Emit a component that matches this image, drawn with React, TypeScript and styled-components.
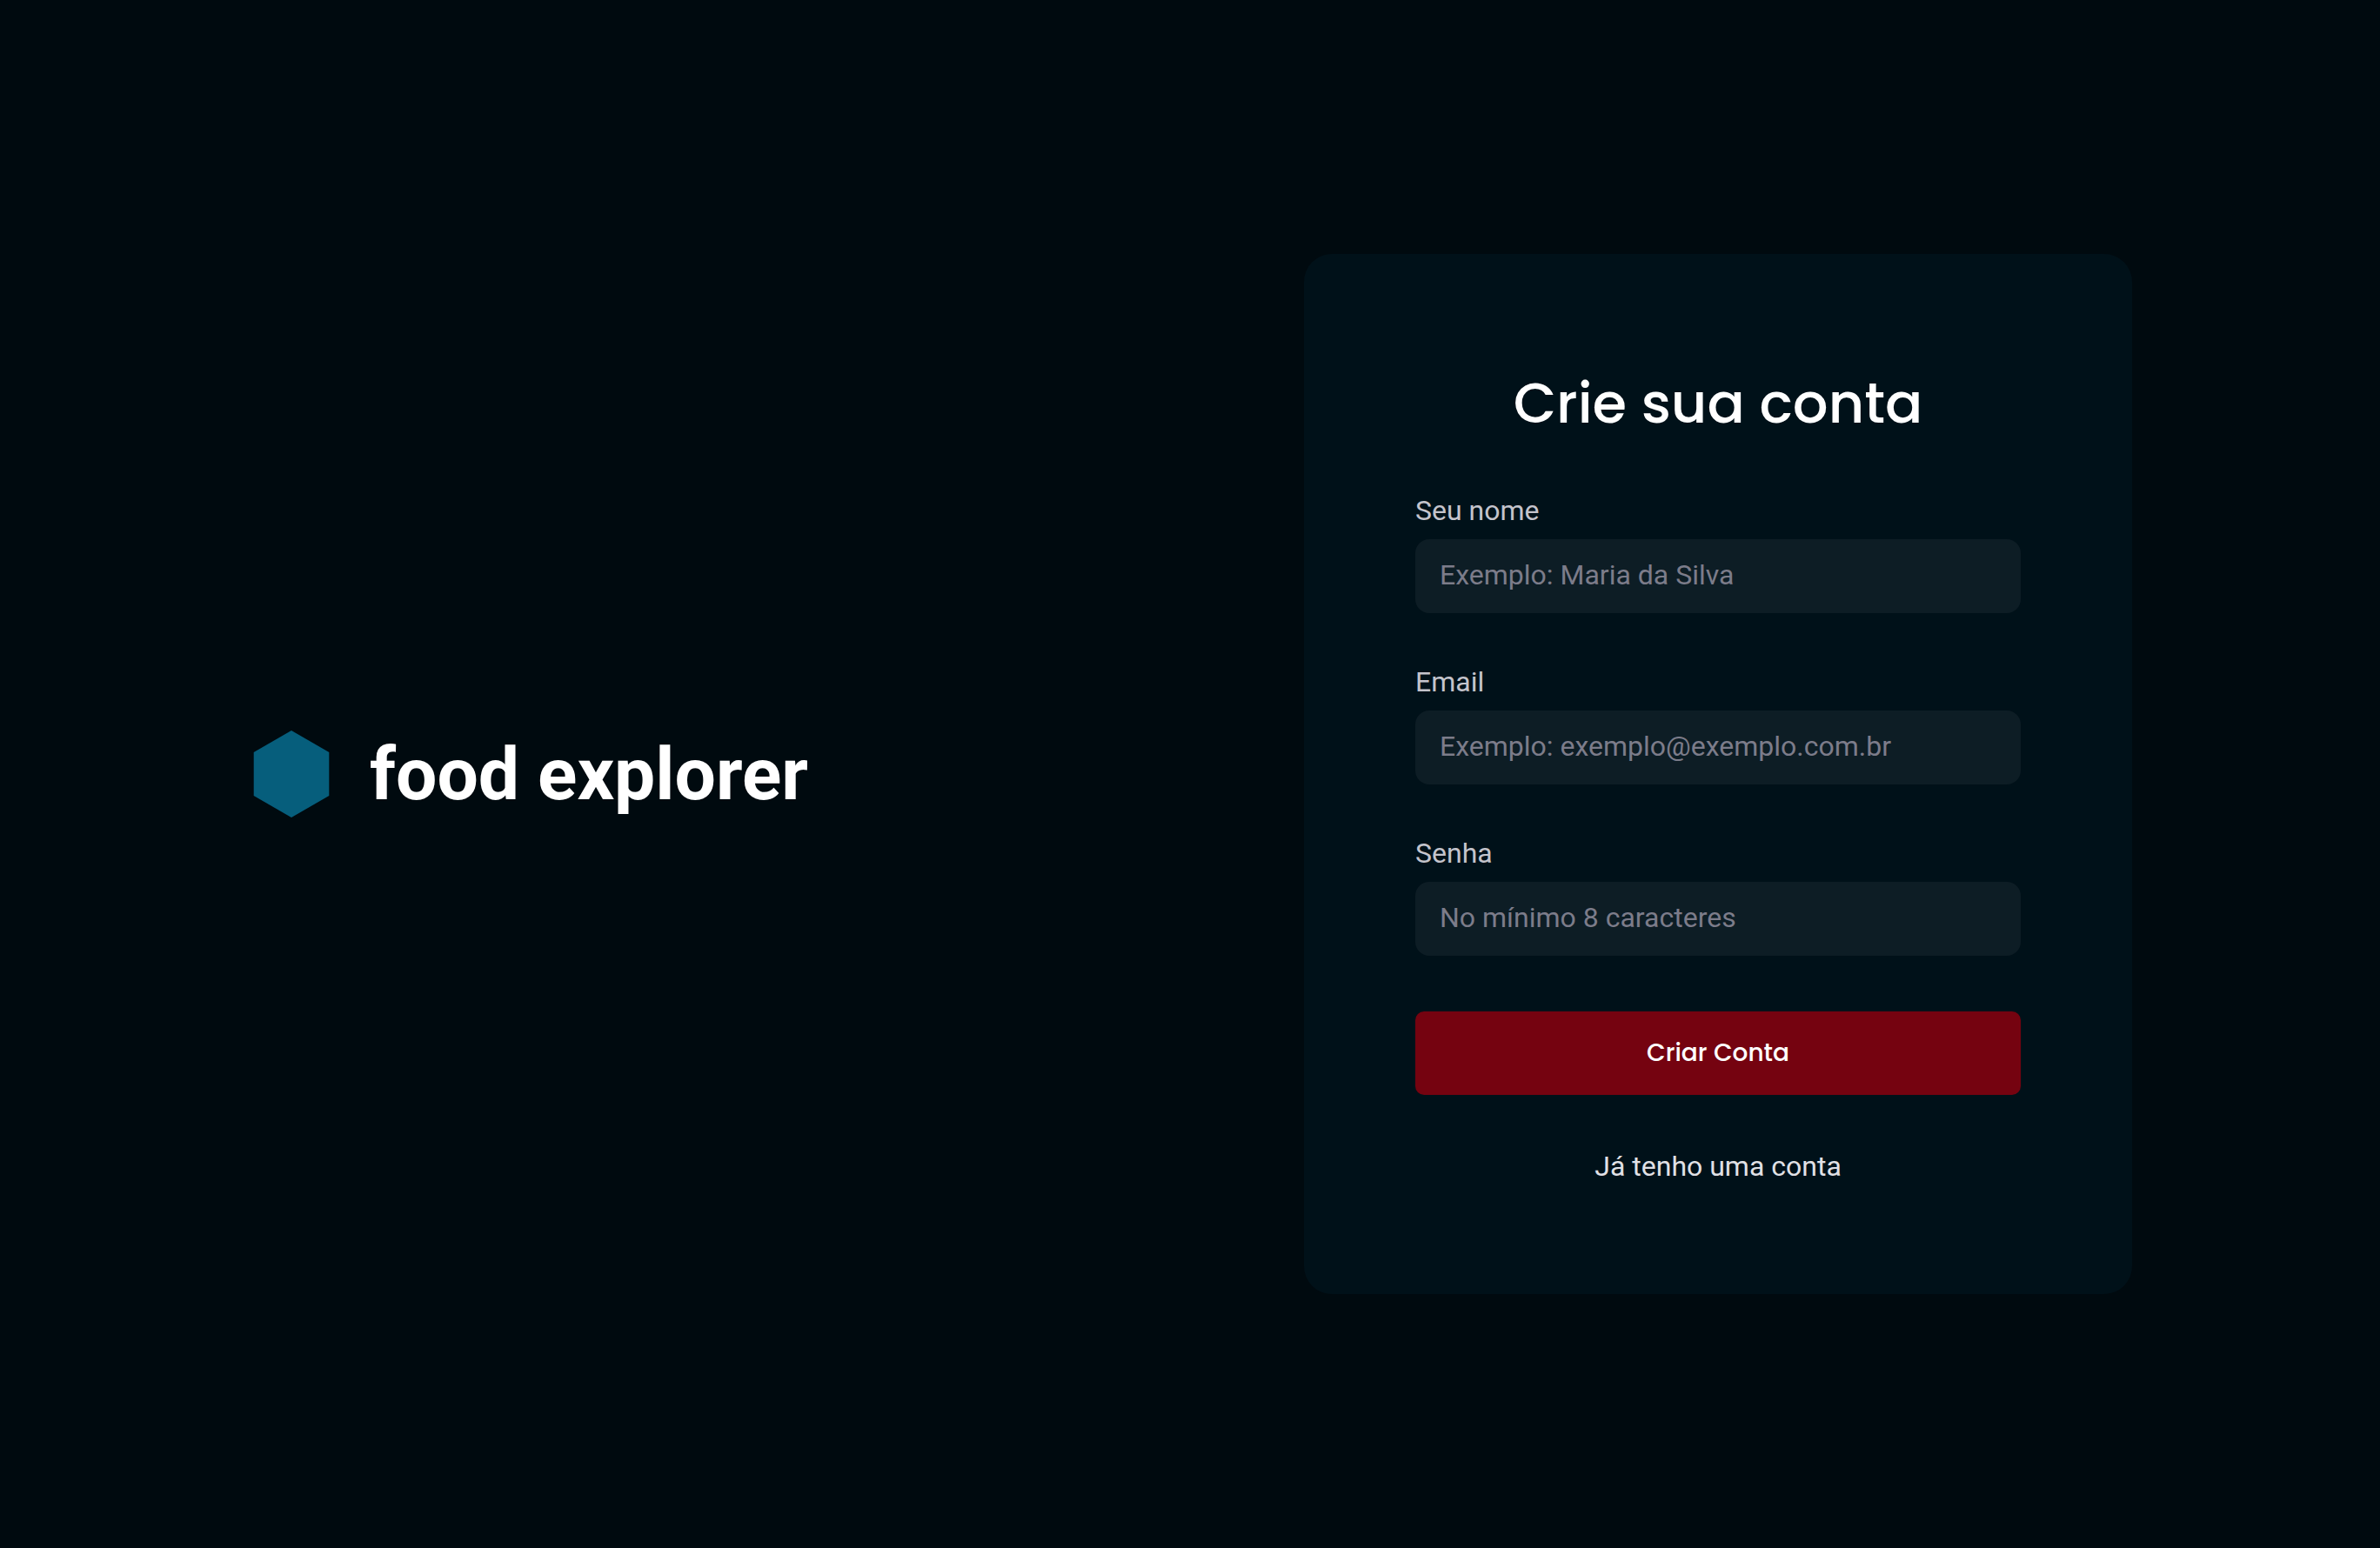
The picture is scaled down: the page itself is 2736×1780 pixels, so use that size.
import React, { useId } from "react";
import styled, { createGlobalStyle, ThemeProvider } from "styled-components";

const theme = {
  background: "#000A0F",
  card: "#001119",
  field: "#0D1D25",
  brand: "#065E7C",
  tomato: "#750310",
  white: "#FFFFFF",
  light300: "#E1E1E6",
  light400: "#C4C4CC",
  light500: "#7C7C8A",
  body: 'Roboto, "Liberation Sans", sans-serif',
  display: 'Poppins, Inter, "Liberation Sans", sans-serif',
};

const GlobalStyle = createGlobalStyle`
  *, *::before, *::after {
    box-sizing: border-box;
  }

  body {
    margin: 0;
    background: ${theme.background};
    color: ${theme.light300};
    font-family: ${theme.body};
  }
`;

const Page = styled.main`
  display: flex;
  flex-wrap: wrap;
  align-items: center;
  justify-content: space-around;
  row-gap: 64px;
  min-height: 100vh;
  padding: 64px 0;
`;

const Brand = styled.div`
  display: flex;
  align-items: center;
  gap: 40px;
`;

const BrandMark = styled.svg`
  flex: none;
  width: 100px;
  height: 100px;
  fill: ${({ theme }) => theme.brand};
`;

const BrandName = styled.h1`
  margin: 0;
  color: ${({ theme }) => theme.white};
  font-size: 84px;
  font-weight: 700;
  line-height: normal;
`;

const Card = styled.form`
  display: flex;
  flex-direction: column;
  gap: 64px;
  width: 952px;
  max-width: 100%;
  padding: 128px;
  border-radius: 32px;
  background: ${({ theme }) => theme.card};
`;

const Title = styled.h2`
  margin: 0;
  color: ${({ theme }) => theme.white};
  font-family: ${({ theme }) => theme.display};
  font-size: 64px;
  font-weight: 500;
  line-height: 88px;
  text-align: center;
`;

const FieldGroup = styled.div`
  display: flex;
  flex-direction: column;
  gap: 18px;
`;

const Label = styled.label`
  color: ${({ theme }) => theme.light400};
  font-size: 32px;
  line-height: 30px;
`;

const Input = styled.input`
  width: 100%;
  padding: 23px 28px 25px;
  border: 0;
  border-radius: 16px;
  background: ${({ theme }) => theme.field};
  color: ${({ theme }) => theme.light300};
  font-family: inherit;
  font-size: 32px;
  line-height: 37px;

  &::placeholder {
    color: ${({ theme }) => theme.light500};
    opacity: 1;
  }
`;

const SubmitButton = styled.button`
  height: 96px;
  padding: 0 64px;
  border: 0;
  border-radius: 10px;
  background: ${({ theme }) => theme.tomato};
  color: ${({ theme }) => theme.white};
  font-family: ${({ theme }) => theme.display};
  font-size: 28px;
  font-weight: 500;
  line-height: 48px;
  cursor: pointer;
`;

const SignInLink = styled.a`
  align-self: center;
  color: ${({ theme }) => theme.light300};
  font-size: 32px;
  line-height: 37px;
  text-decoration: none;
`;

type FieldProps = {
  label: string;
  type: string;
  placeholder: string;
};

function Field({ label, type, placeholder }: FieldProps) {
  const id = useId();
  return (
    <FieldGroup>
      <Label htmlFor={id}>{label}</Label>
      <Input id={id} type={type} placeholder={placeholder} />
    </FieldGroup>
  );
}

export default function App() {
  return (
    <ThemeProvider theme={theme}>
      <GlobalStyle />
      <Page>
        <Brand>
          <BrandMark viewBox="0 0 100 100" aria-hidden="true">
            <path d="M50 0L93.3 25V75L50 100L6.7 75V25Z" />
          </BrandMark>
          <BrandName>food explorer</BrandName>
        </Brand>
        <Card onSubmit={(event) => event.preventDefault()}>
          <Title>Crie sua conta</Title>
          <Field label="Seu nome" type="text" placeholder="Exemplo: Maria da Silva" />
          <Field label="Email" type="email" placeholder="Exemplo: exemplo@exemplo.com.br" />
          <Field label="Senha" type="password" placeholder="No mínimo 8 caracteres" />
          <SubmitButton type="submit">Criar Conta</SubmitButton>
          <SignInLink href="#entrar">Já tenho uma conta</SignInLink>
        </Card>
      </Page>
    </ThemeProvider>
  );
}
